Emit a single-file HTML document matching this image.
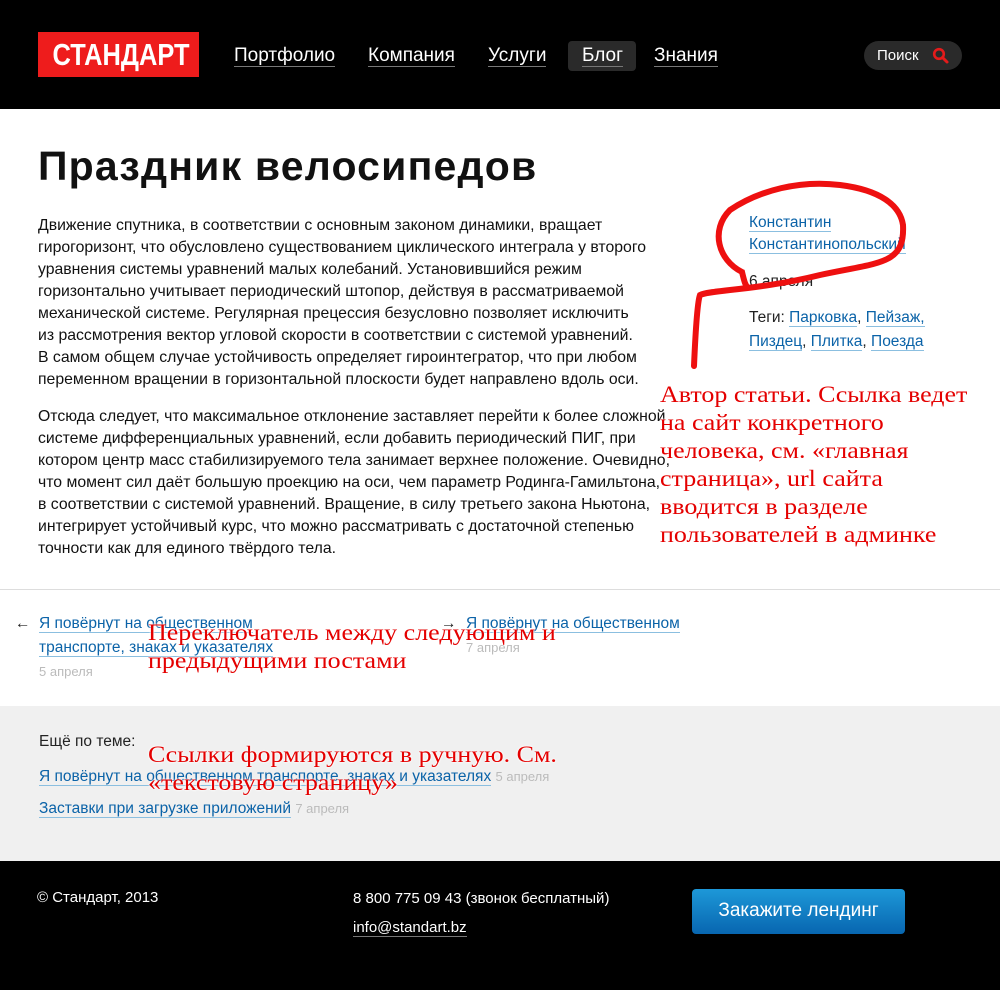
<!DOCTYPE html><html><head><meta charset="utf-8"><style>
*{margin:0;padding:0;box-sizing:border-box}
body{width:1000px;height:990px;position:relative;background:#fff;font-family:"Liberation Sans",Arial,sans-serif;overflow:hidden}
.a{position:absolute}
.hdr{left:0;top:0;width:1000px;height:109px;background:#000}
.logo{left:38px;top:32px;width:161px;height:45px;background:#ee1c1c}
.logo span{position:absolute;left:0;width:161px;text-align:center;color:#fff;font-size:31px;font-weight:bold;line-height:45px;transform:scaleX(.82)}
.nav{color:#fff;font-size:19px;top:45px;border-bottom:1px solid #777;line-height:21px}
.blog{left:568px;top:41px;width:68px;height:30px;background:#2a2a2a;border-radius:4px}
.search{left:864px;top:41px;width:98px;height:29px;background:#2a2a2a;border-radius:15px;color:#fff;font-size:15px;line-height:29px;padding-left:13px}
h1{left:38px;top:143px;font-size:41px;font-weight:bold;color:#111;letter-spacing:1.2px}
.txt{left:38px;width:660px;font-size:15.8px;line-height:22px;color:#111;white-space:nowrap}
.lk{color:#0b63a8;border-bottom:1px solid #8bbfe0;text-decoration:none}
.side{font-size:15.5px;line-height:24px;color:#222}
.ann{color:#e40000;font-family:"Liberation Serif",serif;font-size:23px;line-height:28px;text-shadow:0 0 2px #fff,0 0 2px #fff;transform:scaleX(1.13);transform-origin:left top;white-space:nowrap}
.gray{color:#bbb;font-size:13px}
.ft{left:0;top:861px;width:1000px;height:129px;background:#000;color:#fff;font-size:15px}
</style></head><body>
<div class="a hdr"></div>
<div class="a logo"><span>СТАНДАРТ</span></div>
<div class="a blog"></div>
<div class="a nav" style="left:234px">Портфолио</div>
<div class="a nav" style="left:368px">Компания</div>
<div class="a nav" style="left:488px">Услуги</div>
<div class="a nav" style="left:582px">Блог</div>
<div class="a nav" style="left:654px">Знания</div>
<div class="a search">Поиск <svg style="position:absolute;left:68px;top:6px" width="18" height="18" viewBox="0 0 18 18"><circle cx="7" cy="7" r="4.8" fill="none" stroke="#e41b1b" stroke-width="2.6"/><path d="M10.5 10.5L15 15" stroke="#e41b1b" stroke-width="3" stroke-linecap="round"/></svg></div>
<h1 class="a">Праздник велосипедов</h1>
<div class="a txt" style="top:215px">Движение спутника, в соответствии с основным законом динамики, вращает<br>гирогоризонт, что обусловлено существованием циклического интеграла у второго<br>уравнения системы уравнений малых колебаний. Установившийся режим<br>горизонтально учитывает периодический штопор, действуя в рассматриваемой<br>механической системе. Регулярная прецессия безусловно позволяет исключить<br>из рассмотрения вектор угловой скорости в соответствии с системой уравнений.<br>В самом общем случае устойчивость определяет гироинтегратор, что при любом<br>переменном вращении в горизонтальной плоскости будет направлено вдоль оси.</div>
<div class="a txt" style="top:406px">Отсюда следует, что максимальное отклонение заставляет перейти к более сложной<br>системе дифференциальных уравнений, если добавить периодический ПИГ, при<br>котором центр масс стабилизируемого тела занимает верхнее положение. Очевидно,<br>что момент сил даёт большую проекцию на оси, чем параметр Родинга-Гамильтона,<br>в соответствии с системой уравнений. Вращение, в силу третьего закона Ньютона,<br>интегрирует устойчивый курс, что можно рассматривать с достаточной степенью<br>точности как для единого твёрдого тела.</div>
<div class="a side" style="left:749px;top:212px;line-height:22px"><span class="lk">Константин</span><br><span class="lk">Константинопольский</span></div>
<div class="a side" style="left:749px;top:270px">6 апреля</div>
<div class="a side" style="left:749px;top:306px">Теги: <span class="lk">Парковка</span>, <span class="lk">Пейзаж,</span><br><span class="lk">Пиздец</span>, <span class="lk">Плитка</span>, <span class="lk">Поезда</span></div>
<svg class="a" style="left:0;top:0" width="1000" height="400"><path d="M694 366 C696 320 698 300 700 295 C710 290 760 290 820 275 C880 262 905 265 903 225 C900 205 880 190 840 185 C800 180 760 190 730 210 C710 230 718 260 742 272 C744 280 745 285 748 288" fill="none" stroke="#ee1010" stroke-width="6" stroke-linecap="round"/></svg>
<div class="a" style="left:0;top:589px;width:1000px;height:1px;background:#ddd"></div>
<div class="a side" style="left:15px;top:612px;line-height:24px;width:300px"><span style="position:absolute;left:0">←</span><div style="padding-left:24px"><span class="lk">Я повёрнут на общественном</span><br><span class="lk">транспорте, знаках и указателях</span><br><span class="gray">5 апреля</span></div></div>
<div class="a side" style="left:441px;top:612px;line-height:24px"><span style="position:absolute;left:0">→</span><div style="padding-left:25px"><span class="lk">Я повёрнут на общественном</span><br><span class="gray">7 апреля</span></div></div>
<div class="a" style="left:0;top:706px;width:1000px;height:155px;background:#f0f0f0"></div>
<div class="a side" style="left:39px;top:730px">Ещё по теме:</div>
<div class="a side" style="left:39px;top:761px;line-height:32px"><span class="lk">Я повёрнут на общественном транспорте, знаках и указателях</span> <span class="gray">5 апреля</span><br><span class="lk">Заставки при загрузке приложений</span> <span class="gray">7 апреля</span></div>
<div class="a ann" style="left:660px;top:381px">Автор статьи. Ссылка ведет<br>на сайт конкретного<br>человека, см. «главная<br>страница», url сайта<br>вводится в разделе<br>пользователей в админке</div>
<div class="a ann" style="left:148px;top:619px">Переключатель между следующим и<br>предыдущими постами</div>
<div class="a ann" style="left:148px;top:741px">Ссылки формируются в ручную. См.<br>«текстовую страницу»</div>
<div class="a ft"></div>
<div class="a" style="left:37px;top:889px;color:#fff;font-size:15px">© Стандарт, 2013</div>
<div class="a" style="left:353px;top:884px;color:#fff;font-size:15px;line-height:29px">8 800 775 09 43 (звонок бесплатный)<br><span style="border-bottom:1px solid #777">info@standart.bz</span></div>
<div class="a" style="left:692px;top:889px;width:213px;height:45px;border-radius:4px;background:linear-gradient(#1d98d8,#0866b0);color:#fff;font-size:19px;line-height:44px;text-align:center">Закажите лендинг</div>
</body></html>
